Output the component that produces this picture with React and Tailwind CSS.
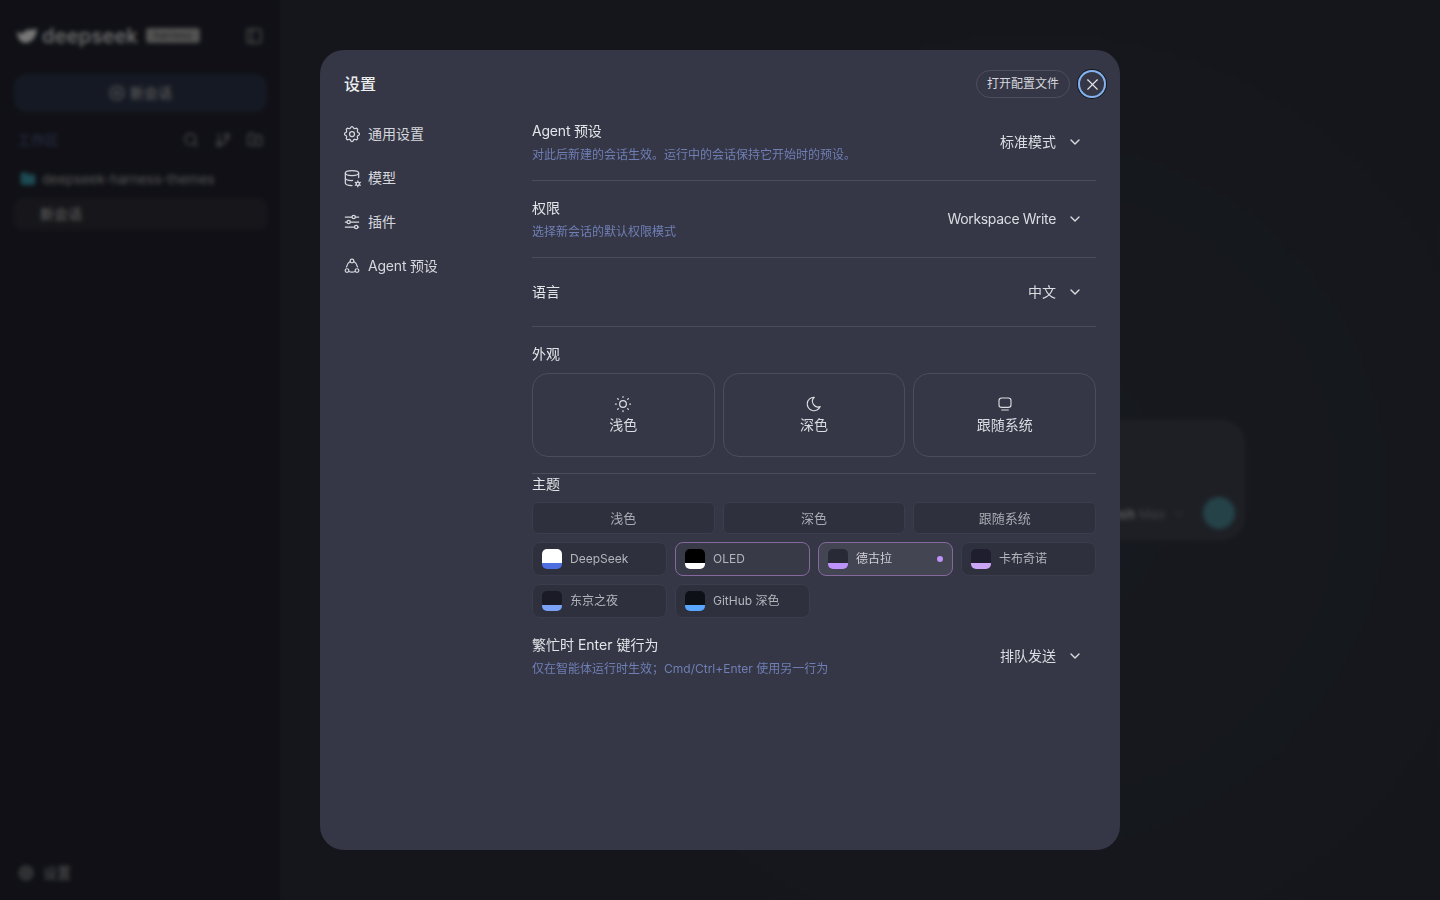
import { ChevronDown, X, Search, PanelLeft, FolderPlus, CirclePlus, Folder, GitBranch } from "lucide-react";
import { TbSettings, TbDatabaseCog, TbAdjustmentsHorizontal, TbSun, TbMoon } from "react-icons/tb";

const FONT = "font-['Inter','Noto_Sans_CJK_SC',sans-serif]";

const NAV = [
  { label: "通用设置", Icon: TbSettings },
  { label: "模型", Icon: TbDatabaseCog },
  { label: "插件", Icon: TbAdjustmentsHorizontal },
  { label: "Agent 预设", Icon: AgentIcon, tight: true },
];

const THEMES = [
  { name: "DeepSeek", top: "bg-white", bottom: "bg-[#4d6fe0]" },
  { name: "OLED", top: "bg-black", bottom: "bg-white", outlined: true },
  { name: "德古拉", top: "bg-[#282a36]", bottom: "bg-[#bd93f9]", active: true },
  { name: "卡布奇诺", top: "bg-[#1e1e2e]", bottom: "bg-[#cba6f7]" },
  { name: "东京之夜", top: "bg-[#1a1b26]", bottom: "bg-[#7aa2f7]" },
  { name: "GitHub 深色", top: "bg-[#0d1117]", bottom: "bg-[#58a6ff]" },
];

function AgentIcon({ className }) {
  return (
    <svg width="20" height="20" viewBox="0 0 24 24" fill="none" stroke="currentColor" strokeWidth="1.5" strokeLinecap="round" className={className}>
      <circle cx="12" cy="6" r="2.200" />
      <circle cx="6" cy="17.500" r="2.200" />
      <circle cx="18" cy="17.500" r="2.200" />
      <path d="M9.800 6.600c-2.200 1.200-3.800 3.400-4.400 6.400" />
      <path d="M14.200 6.600c2.200 1.200 3.800 3.400 4.400 6.400" />
      <path d="M8.200 18.600c2.400 1.100 5.200 1.100 7.600 0" />
    </svg>
  );
}

function SystemIcon() {
  return (
    <svg width="16" height="16" viewBox="0 0 24 24" fill="none" stroke="currentColor" strokeWidth="1.7" strokeLinecap="round">
      <rect x="3" y="3" width="18" height="14" rx="4" />
      <path d="M7 21h10" />
    </svg>
  );
}

function Sidebar() {
  return (
    <aside className="flex h-full w-[280px] shrink-0 flex-col bg-[#1b1c25] pr-[13px] pl-[14px]">
      <div className="flex h-[72px] items-center justify-between pb-[1px]">
        <div className="flex items-center gap-1 pl-[2px]">
          <svg width="22" height="18" viewBox="0 0 24 20" fill="#c8c8c8">
            <path d="M1 5c2 1 3 1 5 3 3-4 8-6 11-5 2 0 5-1 6-2 0 4-1 8-3 11-3 5-9 7-13 5C3 15 1 10 1 5z" />
          </svg>
          <span className="text-xl leading-none font-medium tracking-[0.3px] text-[#c4c4c4]">deepseek</span>
          <span className="ml-1 rounded-[3px] bg-[#8a8a8a] px-2 text-[10px] leading-[15px] text-[#3a3a3a]">harness</span>
        </div>
        <PanelLeft size={18} className="mr-[4px] text-[#888]" />
      </div>
      <div className="mt-[2px] flex h-[38px] items-center justify-center gap-[5px] rounded-xl bg-[#242b3b] text-sm text-[#a8a8a8]">
        <CirclePlus size={16} />
        新会话
      </div>
      <div className="mt-[18px] flex h-5 items-center justify-between pr-[4px] pl-[3px] text-sm text-[#47507a]">
        <span>工作区</span>
        <div className="flex gap-4 text-[#888]">
          <Search size={16} />
          <GitBranch size={16} />
          <FolderPlus size={16} />
        </div>
      </div>
      <div className="mt-[19px] flex items-center gap-[6px] pl-[6px] text-[13.5px] leading-5 text-[#909090]">
        <Folder size={16} className="fill-[#2f7c8a] text-[#2f7c8a]" />
        deepseek-harness-themes
      </div>
      <div className="mt-[9px] flex h-8 items-center rounded-lg bg-[#26262d] pl-[26px] text-sm text-[#a8a8a8]">新会话</div>
      <div className="mt-auto mb-[17px] flex items-center gap-2 pl-[3px] text-sm text-[#909090]">
        <TbSettings size={18} />
        设置
      </div>
    </aside>
  );
}

function MainBackdrop() {
  return (
    <main className="flex h-full flex-1 items-end justify-center bg-[radial-gradient(circle_at_65%_55%,#272b35_0%,#23262f_60%)] pb-[360px]">
      <div className="flex h-[120px] w-[770px] items-end justify-end rounded-3xl bg-[#32353f] p-[10px]">
        <div className="mr-[18px] mb-[6px] flex items-center gap-1 text-[13px] font-semibold text-[#999]">
          Flash <span className="font-normal text-[#666]">Max</span>
          <ChevronDown size={12} className="ml-1 text-[#666]" />
        </div>
        <div className="mb-[1px] h-8 w-8 rounded-full bg-[#3c6f78]" />
      </div>
    </main>
  );
}

function SelectButton({ value, tight }) {
  return (
    <button className="flex h-8 shrink-0 items-center gap-[11px] pr-[13px] text-sm text-[#dcdde2]">
      <span className={tight ? "tracking-[-0.33px]" : ""}>{value}</span>
      <ChevronDown size={16} strokeWidth={2} />
    </button>
  );
}

function SettingRow({ label, hint, value, className, tightValue, tightLabel }) {
  return (
    <div className={`flex items-center justify-between ${className}`}>
      <div>
        <div className={`text-sm leading-5 text-[#e4e5e9] ${tightLabel ? "tracking-[-0.2px]" : ""}`}>{label}</div>
        {hint && <div className="mt-[6px] text-xs leading-4 text-[#6f7fb5]">{hint}</div>}
      </div>
      <SelectButton value={value} tight={tightValue} />
    </div>
  );
}

function ThemeChip({ theme }) {
  const border = theme.active || theme.outlined ? "border-[#86689f]" : "border-[#3b3d4c]";
  const bg = theme.active ? "bg-[#434552]" : theme.outlined ? "bg-[#383a48]" : "bg-[#2e303e]";
  return (
    <button className={`flex h-[34px] items-center gap-2 rounded-lg border pr-[9px] pl-[9px] text-xs ${border} ${bg} ${theme.active ? "text-[#d0d0d6]" : "text-[#b4b5bb]"}`}>
      <span className="flex h-5 w-5 shrink-0 flex-col overflow-hidden rounded-[5px]">
        <span className={`flex-1 ${theme.top}`} />
        <span className={`h-[6px] ${theme.bottom}`} />
      </span>
      <span className="flex-1 text-left">{theme.name}</span>
      {theme.active && <span className="h-[6px] w-[6px] rounded-full bg-[#bd93f9]" />}
    </button>
  );
}

function AppearanceCard({ icon, label }) {
  return (
    <button className="flex flex-col items-center justify-center gap-[3px] rounded-2xl border border-[#4b4d5b] text-sm leading-5 text-[#dcdde2]">
      <span className="flex h-4 items-center justify-center">{icon}</span>
      {label}
    </button>
  );
}

function SettingsModal() {
  return (
    <div className="flex h-[800px] w-[800px] flex-col rounded-3xl bg-[#353746] pr-6 pl-6">
      <header className="flex h-[54px] items-start justify-between pt-5">
        <h1 className="text-base leading-7 font-medium text-[#eceded]">设置</h1>
        <div className="-mr-[10px] flex items-center gap-2">
          <button className="flex h-7 items-center rounded-full border border-[#4c4e5c] px-[10px] text-xs text-[#d6d7dc]">打开配置文件</button>
          <button className="flex h-7 w-7 items-center justify-center rounded-full text-[#e6e6ea] shadow-[inset_0_0_0_2px_#82b3ef,0_0_0_1px_#15161c]">
            <X size={19} strokeWidth={1.4} />
          </button>
        </div>
      </header>
      <div className="flex flex-1">
        <nav className="w-[188px] shrink-0 pt-2">
          {NAV.map(({ label, Icon, tight }) => (
            <div key={label} className={`flex h-11 items-center gap-[6px] text-sm text-[#d6d7dc] ${tight ? "tracking-[-0.2px]" : ""}`}>
              <Icon size={20} strokeWidth={1.5} className="-ml-[2px]" />
              {label}
            </div>
          ))}
        </nav>
        <section className="flex-1">
          <SettingRow
            className="h-[77px] border-b border-[#4b4d5b]"
            label="Agent 预设"
            hint="对此后新建的会话生效。运行中的会话保持它开始时的预设。"
            value="标准模式"
            tightLabel
          />
          <SettingRow
            className="h-[77px] border-b border-[#4b4d5b]"
            label="权限"
            hint="选择新会话的默认权限模式"
            value="Workspace Write"
            tightValue
          />
          <SettingRow className="h-[69px] border-b border-[#4b4d5b]" label="语言" value="中文" />
          <div className="mt-[17px] text-sm leading-5 text-[#e4e5e9]">外观</div>
          <div className="mt-[9px] grid h-[84px] grid-cols-3 gap-2">
            <AppearanceCard icon={<TbSun size={20} strokeWidth={1.5} />} label="浅色" />
            <AppearanceCard icon={<TbMoon size={18} strokeWidth={1.5} />} label="深色" />
            <AppearanceCard icon={<SystemIcon />} label="跟随系统" />
          </div>
          <div className="mt-4 border-t border-[#4b4d5b] text-sm leading-5 text-[#e4e5e9]">主题</div>
          <div className="mt-2 grid h-8 grid-cols-3 gap-2">
            {["浅色", "深色", "跟随系统"].map((label) => (
              <button key={label} className="rounded-md border border-[#3b3d4c] bg-[#2e303e] pt-[1px] text-[13px] text-[#a9aab2]">
                {label}
              </button>
            ))}
          </div>
          <div className="mt-2 grid grid-cols-4 gap-2">
            {THEMES.map((theme) => (
              <ThemeChip key={theme.name} theme={theme} />
            ))}
          </div>
          <SettingRow
            className="mt-[17px]"
            label="繁忙时 Enter 键行为"
            hint="仅在智能体运行时生效；Cmd/Ctrl+Enter 使用另一行为"
            value="排队发送"
          />
        </section>
      </div>
    </div>
  );
}

export default function App() {
  return (
    <div className={`relative h-[900px] w-[1440px] overflow-hidden ${FONT}`}>
      <div className="flex h-full">
        <Sidebar />
        <MainBackdrop />
      </div>
      <div className="absolute inset-0 flex items-center justify-center bg-black/40 backdrop-blur-[2px]">
        <SettingsModal />
      </div>
    </div>
  );
}
